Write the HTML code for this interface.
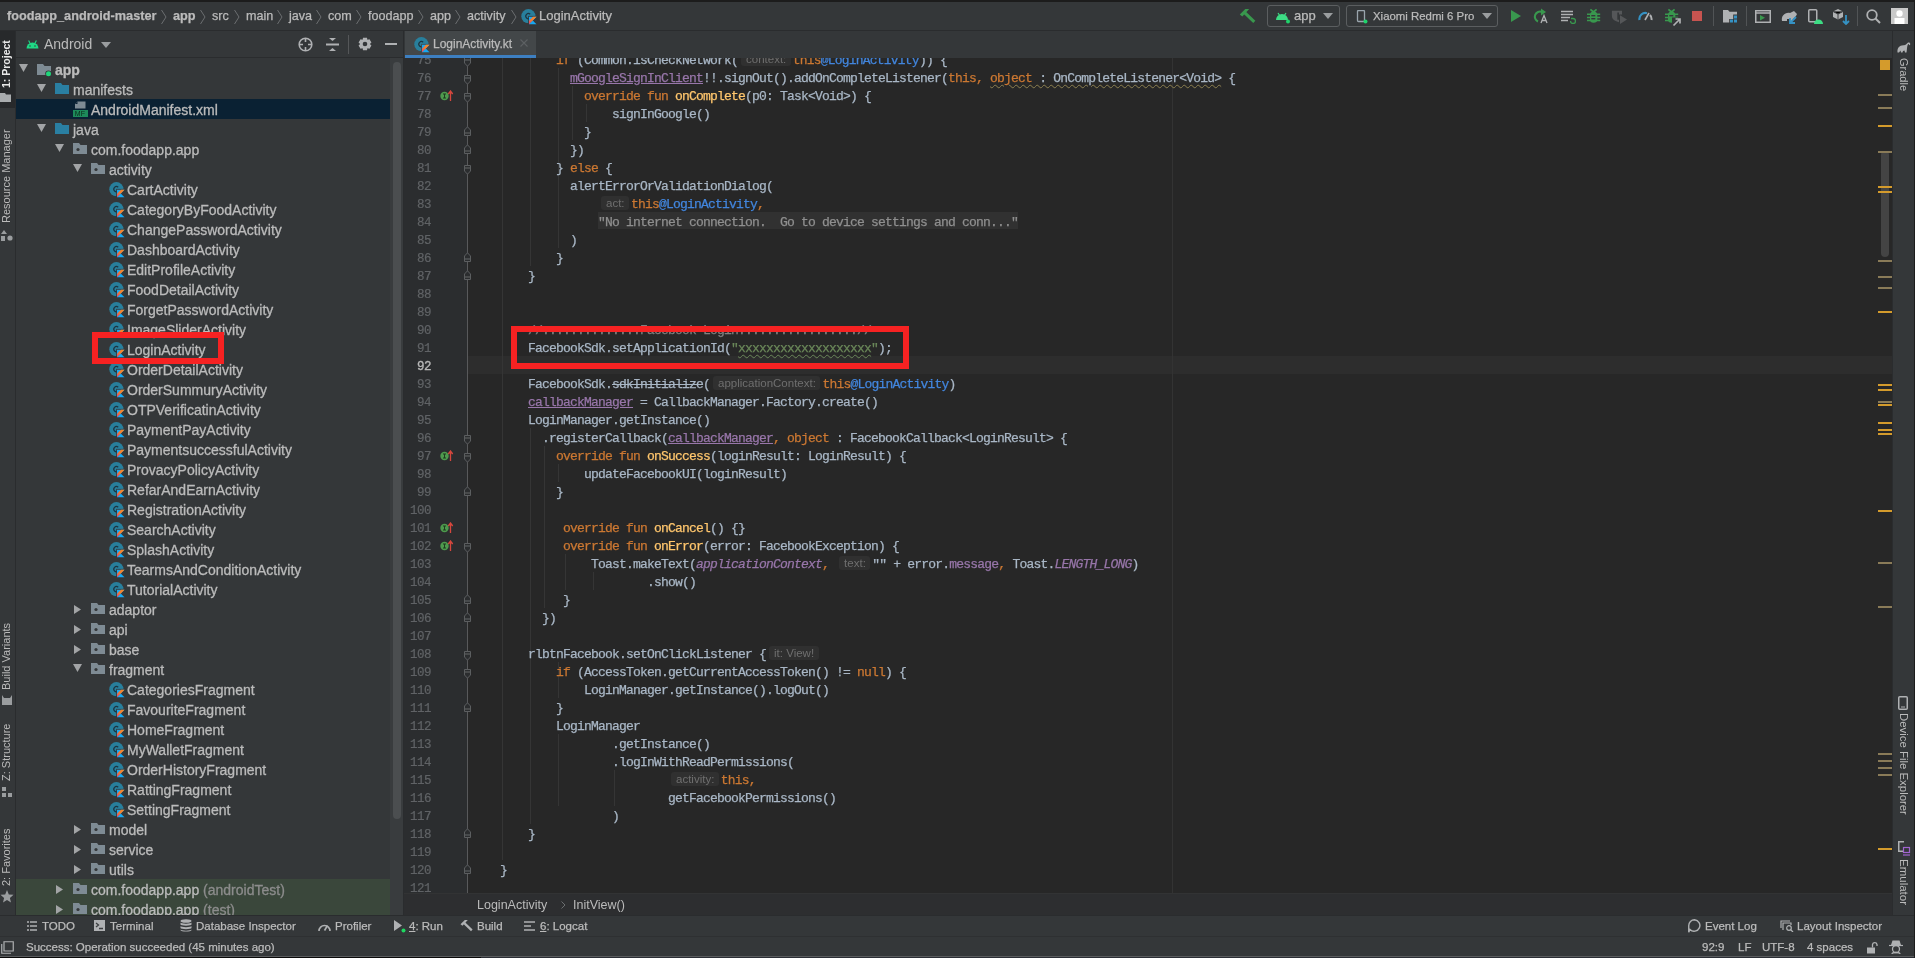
<!DOCTYPE html>
<html><head><meta charset="utf-8">
<style>
*{box-sizing:border-box;margin:0;padding:0}
html,body{will-change:transform;width:1915px;height:958px;overflow:hidden;background:#343739;font-family:"Liberation Sans",sans-serif;color:#bbbbbb}
.a{position:absolute}
#topline{left:0;top:0;width:1915px;height:2px;background:#1c1c1c}
#topbar{left:0;top:2px;width:1915px;height:29px;background:#343739;border-bottom:1px solid #2a2c2e}
.bc{position:absolute;top:0;height:28px;line-height:28px;font-size:13px;color:#bbbbbb;white-space:nowrap;-webkit-text-stroke:0.25px}
#leftstrip{left:0;top:31px;width:16px;height:884px;background:#343739;border-right:1px solid #2a2c2e}
#project{left:16px;top:31px;width:388px;height:884px;background:#343739}
#phead{left:0;top:0;width:388px;height:27px;border-bottom:1px solid #2a2c2e}
#tree{left:0;top:27px;width:388px;height:857px;overflow:hidden}
.row{position:absolute;left:0;height:20px;line-height:20px;font-size:14px;white-space:nowrap;color:#bbbbbb}
.row .t{position:absolute;top:0.5px;-webkit-text-stroke:0.3px}
#pdiv{left:403px;top:31px;width:1px;height:884px;background:#2a2c2e}
#tabs{left:404px;top:31px;width:1489px;height:27px;background:#343739}
#gutter{left:404px;top:58px;width:64px;height:835px;background:#2b2d2f;overflow:hidden}
#code{left:468px;top:58px;width:1424px;height:835px;background:#272727;overflow:hidden}
.ln{position:absolute;left:0;width:27px;text-align:right;font-family:"Liberation Mono",monospace;font-size:12.5px;letter-spacing:-0.5px;color:#606366;height:18px;line-height:18px;padding-top:2px;-webkit-text-stroke:0.2px}
.cl{position:absolute;left:4px;height:18px;line-height:18px;padding-top:2px;font-family:"Liberation Mono",monospace;font-size:13px;letter-spacing:-0.8px;-webkit-text-stroke:0.25px;color:#a9b7c6;white-space:pre}
.k{color:#cc7832}.f{color:#ffc66d}.p{color:#9876aa}.pu{color:#9876aa;text-decoration:underline;text-decoration-color:#9876aa}
.lb{color:#4286de}.s{color:#6a8759}.cm{color:#808080}.it{font-style:italic}
.h{display:inline-block;font-family:"Liberation Sans",sans-serif;font-size:11.5px;letter-spacing:0;-webkit-text-stroke:0;color:#6f6f6f;background:#303030;border-radius:3px;padding:0 4.5px 0 5px;height:14px;line-height:14px;vertical-align:1px;margin:0 2px 0 3px}
#bcbar{left:404px;top:893px;width:1489px;height:22px;background:#2d2e30;border-top:1px solid #323334}
#rightstrip{left:1892px;top:31px;width:23px;height:884px;background:#343739;border-left:1px solid #2a2c2e}
#bottombar{left:0;top:915px;width:1915px;height:21px;background:#343739;border-top:1px solid #2a2c2e}
#statusbar{left:0;top:936px;width:1915px;height:22px;background:#343739;border-top:1px solid #2e3032}
.tb{position:absolute;top:0;height:21px;line-height:21px;font-size:11.5px;color:#bbbbbb;white-space:nowrap;-webkit-text-stroke:0.25px}
.vt{position:absolute;font-size:11px;color:#bbbbbb;white-space:nowrap;transform-origin:0 0;transform:rotate(-90deg)}
.ln.cur{color:#b8b8b8;-webkit-text-stroke:0.35px}
.wv{text-decoration:underline wavy #8c8050;text-decoration-thickness:1px;text-underline-offset:2px}
.wg{text-decoration:underline wavy #6a8759;text-decoration-thickness:1px;text-underline-offset:2px}
.st{text-decoration:line-through}
.fold{color:#8f8f8f}

</style></head><body>
<svg width="0" height="0" style="position:absolute"><defs><linearGradient id="kg" x1="0" y1="1" x2="1" y2="0"><stop offset="0" stop-color="#e0407a"/><stop offset="0.45" stop-color="#f57a2e"/><stop offset="1" stop-color="#fb8c25"/></linearGradient>
<symbol id="clsic" viewBox="0 0 17 17"><circle cx="7.4" cy="7.2" r="7.1" fill="#287f9c"/><path d="M9.2 5.3A2.6 2.6 0 1 0 9.2 9.1" stroke="#1c3541" stroke-width="1.2" fill="none"/><rect x="7.2" y="6.9" width="9.2" height="9.2" fill="#343739"/><path d="M8 7.7H15.5L8 15.3Z" fill="#18a8f2"/><path d="M11.8 11.5L15.5 15.3H8Z" fill="#18a8f2"/><path d="M12 7.7H15.5L8 15.3V11.7Z" fill="url(#kg)"/></symbol><symbol id="clsic2" viewBox="0 0 17 17"><circle cx="7.4" cy="7.2" r="7.1" fill="#287f9c"/><path d="M9.2 5.3A2.6 2.6 0 1 0 9.2 9.1" stroke="#1c3541" stroke-width="1.2" fill="none"/><rect x="7.2" y="6.9" width="9.2" height="9.2" fill="#434749"/><path d="M8 7.7H15.5L8 15.3Z" fill="#18a8f2"/><path d="M11.8 11.5L15.5 15.3H8Z" fill="#18a8f2"/><path d="M12 7.7H15.5L8 15.3V11.7Z" fill="url(#kg)"/></symbol></defs></svg>
<div id="topline" class="a"></div>
<div id="topbar" class="a">
<div class="bc" style="left:7px;font-weight:bold;font-size:12.7px;">foodapp_android-master</div>
<div class="bc" style="left:173px;font-weight:bold;font-size:12.7px;">app</div>
<div class="bc" style="left:212px;font-size:12.6px;">src</div>
<div class="bc" style="left:246px;font-size:12.6px;">main</div>
<div class="bc" style="left:289px;font-size:12.6px;">java</div>
<div class="bc" style="left:328px;font-size:12.6px;">com</div>
<div class="bc" style="left:368px;font-size:12.6px;">foodapp</div>
<div class="bc" style="left:430px;font-size:12.6px;">app</div>
<div class="bc" style="left:467px;font-size:12.6px;">activity</div>
<svg class="a" style="left:161px;top:7px" width="6" height="16" viewBox="0 0 6 16"><path d="M0.5 1L5 8L0.5 15" stroke="#6b6e70" stroke-width="1" fill="none"/></svg>
<svg class="a" style="left:200px;top:7px" width="6" height="16" viewBox="0 0 6 16"><path d="M0.5 1L5 8L0.5 15" stroke="#6b6e70" stroke-width="1" fill="none"/></svg>
<svg class="a" style="left:234px;top:7px" width="6" height="16" viewBox="0 0 6 16"><path d="M0.5 1L5 8L0.5 15" stroke="#6b6e70" stroke-width="1" fill="none"/></svg>
<svg class="a" style="left:277px;top:7px" width="6" height="16" viewBox="0 0 6 16"><path d="M0.5 1L5 8L0.5 15" stroke="#6b6e70" stroke-width="1" fill="none"/></svg>
<svg class="a" style="left:316px;top:7px" width="6" height="16" viewBox="0 0 6 16"><path d="M0.5 1L5 8L0.5 15" stroke="#6b6e70" stroke-width="1" fill="none"/></svg>
<svg class="a" style="left:356px;top:7px" width="6" height="16" viewBox="0 0 6 16"><path d="M0.5 1L5 8L0.5 15" stroke="#6b6e70" stroke-width="1" fill="none"/></svg>
<svg class="a" style="left:418px;top:7px" width="6" height="16" viewBox="0 0 6 16"><path d="M0.5 1L5 8L0.5 15" stroke="#6b6e70" stroke-width="1" fill="none"/></svg>
<svg class="a" style="left:455px;top:7px" width="6" height="16" viewBox="0 0 6 16"><path d="M0.5 1L5 8L0.5 15" stroke="#6b6e70" stroke-width="1" fill="none"/></svg>
<svg class="a" style="left:511px;top:7px" width="6" height="16" viewBox="0 0 6 16"><path d="M0.5 1L5 8L0.5 15" stroke="#6b6e70" stroke-width="1" fill="none"/></svg>
<svg class="a" style="left:521px;top:7px" width="17" height="17" viewBox="0 0 17 17"><use href="#clsic"/></svg>
<div class="bc" style="left:539px">LoginActivity</div>
</div>
<svg class="a" style="left:1236px;top:4px" width="24" height="24" viewBox="0 0 24 24"><path d="M3.8 10.4L9.3 5H13.2L6.3 12.4Z" fill="#39984e"/><path d="M8.6 8.6L18.3 17.8" stroke="#39984e" stroke-width="3.1"/></svg>
<div class="a" style="left:1267px;top:5px;width:73px;height:22px;border:1px solid #5b5e60;border-radius:3px"></div>
<svg class="a" style="left:1275px;top:10px" width="16" height="14" viewBox="0 0 16 14"><path d="M1 10A6 6 0 0 1 13 10Z" fill="#3ddc84"/><path d="M3 3L5 6M11 3L9 6" stroke="#3ddc84" stroke-width="1.2"/><circle cx="13" cy="11.5" r="2" fill="#1fd36b"/></svg>
<div class="bc" style="left:1294px;top:2px;font-size:13px">app</div>
<svg class="a" style="left:1323px;top:13px" width="10" height="6" viewBox="0 0 10 6"><path d="M0 0H10L5 6Z" fill="#9a9d9f"/></svg>
<div class="a" style="left:1346px;top:5px;width:152px;height:22px;border:1px solid #5b5e60;border-radius:3px"></div>
<svg class="a" style="left:1356px;top:10px" width="12" height="14" viewBox="0 0 12 14"><rect x="1.5" y="0.5" width="7" height="11" rx="1" fill="none" stroke="#9aa5ad" stroke-width="1.3"/><circle cx="9.5" cy="11.5" r="2" fill="#1fd36b"/></svg>
<div class="bc" style="left:1373px;top:2px;font-size:11.4px">Xiaomi Redmi 6 Pro</div>
<svg class="a" style="left:1482px;top:13px" width="10" height="6" viewBox="0 0 10 6"><path d="M0 0H10L5 6Z" fill="#9a9d9f"/></svg>
<svg class="a" style="left:1511px;top:10px" width="10" height="12" viewBox="0 0 10 12"><path d="M0 0L10 6L0 12Z" fill="#39984e"/></svg>
<svg class="a" style="left:1533px;top:8px" width="16" height="16" viewBox="0 0 16 16"><path d="M9 4A5 5 0 1 0 5 13.5" stroke="#39984e" stroke-width="2" fill="none"/><path d="M8 0.5L13 4L8 7.5Z" fill="#39984e"/><path d="M8 15L11 7.5L14 15M9.2 12.5H12.8" stroke="#afb1b3" stroke-width="1.3" fill="none"/></svg>
<svg class="a" style="left:1561px;top:10px" width="15" height="14" viewBox="0 0 15 14"><path d="M0 1.5H12M0 4.5H12M0 7.5H9M0 10.5H7" stroke="#afb1b3" stroke-width="1.6"/><path d="M9.5 11A2.5 2.5 0 1 0 12 8.5H10" stroke="#39984e" stroke-width="1.3" fill="none"/></svg>
<svg class="a" style="left:1584px;top:7px" width="18" height="18" viewBox="0 0 18 18"><path d="M6.4 2.3L9.5 5M12.6 2.3L9.5 5" stroke="#39984e" stroke-width="1.7"/><path d="M6 8Q6 4.5 9.6 4.5Q13.3 4.5 13.3 8V12.8Q13.3 15.8 9.6 15.8Q6 15.8 6 12.8Z" fill="#39984e"/><path d="M3 7.2H16.2M3 10.4H16.2M3 13.5H16.2" stroke="#39984e" stroke-width="1.5"/><rect x="7.3" y="8" width="4" height="1.4" fill="#343739"/><rect x="7.3" y="11" width="4" height="1.4" fill="#343739"/></svg>
<svg class="a" style="left:1611px;top:10px" width="17" height="15" viewBox="0 0 17 15"><path d="M0.9 0.8H11V4.5H8V2.5H6.3V9.8H8V12.2C4.2 11.3 0.9 9.3 0.9 6Z" fill="#555759"/><path d="M9 5.3L16 9.6L9 14Z" fill="#555759"/></svg>
<svg class="a" style="left:1638px;top:10px" width="15" height="11" viewBox="0 0 15 11"><path d="M1.5 10A6 6 0 0 1 9 3.2" stroke="#3592c4" stroke-width="2.2" fill="none"/><path d="M7 10L11 3" stroke="#afb1b3" stroke-width="1.6"/><path d="M12 5A6 6 0 0 1 13.5 10" stroke="#afb1b3" stroke-width="2" fill="none"/></svg>
<svg class="a" style="left:1662px;top:7px" width="20" height="20" viewBox="0 0 20 20"><path d="M6.4 2.3L9.5 5M12.6 2.3L9.5 5" stroke="#39984e" stroke-width="1.7"/><path d="M6 8Q6 4.5 9.6 4.5Q13.3 4.5 13.3 8V12.8Q13.3 15.8 9.6 15.8Q6 15.8 6 12.8Z" fill="#39984e"/><path d="M3 7.2H16.2M3 10.4H16.2M3 13.5H9" stroke="#39984e" stroke-width="1.5"/><rect x="7.3" y="8" width="4" height="1.4" fill="#343739"/><path d="M10 10.5H20V20H10Z" fill="#343739"/><path d="M11.5 18.5L17.5 12.5M13.5 12H18V16.5" stroke="#afb1b3" stroke-width="1.7" fill="none"/></svg>
<div class="a" style="left:1692px;top:11px;width:10px;height:10px;background:#c75450"></div>
<div class="a" style="left:1713px;top:6px;width:1px;height:20px;background:#515456"></div>
<svg class="a" style="left:1723px;top:10px" width="16" height="14" viewBox="0 0 16 14"><path d="M0 0H5L6.5 1.8H14V4.6H10.2V9H6.2V12.5H0Z" fill="#afb1b3"/><rect x="11" y="5.5" width="3" height="3" fill="#3592c4"/><rect x="7" y="9.5" width="3" height="3" fill="#3592c4"/><rect x="11" y="9.5" width="3" height="3" fill="#3592c4"/></svg>
<div class="a" style="left:1746px;top:6px;width:1px;height:20px;background:#515456"></div>
<svg class="a" style="left:1755px;top:10px" width="16" height="13" viewBox="0 0 16 13"><rect x="0.75" y="0.75" width="14.5" height="11.5" fill="none" stroke="#afb1b3" stroke-width="1.5"/><path d="M1 3H15" stroke="#afb1b3" stroke-width="1.5"/><path d="M5 5L10 7.75L5 10.5Z" fill="#39984e"/></svg>
<svg class="a" style="left:1781px;top:9px" width="17" height="15" viewBox="0 0 17 15"><path d="M1 12C0 7 4 3 9 4L13 2L16 5C15 8 12 9 12 11V12H9V10H6V12H3Z" fill="#afb1b3"/><path d="M9 14L15 8M9 9V14H14" stroke="#3592c4" stroke-width="1.8" fill="none"/></svg>
<svg class="a" style="left:1808px;top:9px" width="16" height="16" viewBox="0 0 16 16"><rect x="0.75" y="0.75" width="8" height="12" rx="1" fill="none" stroke="#afb1b3" stroke-width="1.5"/><path d="M6 15A4.5 4.5 0 0 1 15 15Z" fill="#3ddc84"/></svg>
<svg class="a" style="left:1833px;top:9px" width="17" height="16" viewBox="0 0 17 16"><path d="M5 0L10 2.5V8L5 10.5L0 8V2.5Z" fill="#afb1b3"/><path d="M0 2.5L5 5L10 2.5M5 5V10.5" stroke="#3c3f41" stroke-width="1"/><path d="M13 6V15M10 12L13 15L16 12" stroke="#3592c4" stroke-width="1.8" fill="none"/></svg>
<div class="a" style="left:1857px;top:6px;width:1px;height:20px;background:#515456"></div>
<svg class="a" style="left:1866px;top:9px" width="15" height="15" viewBox="0 0 15 15"><circle cx="6" cy="6" r="4.8" fill="none" stroke="#afb1b3" stroke-width="1.8"/><path d="M9.5 9.5L14 14" stroke="#afb1b3" stroke-width="2"/></svg>
<svg class="a" style="left:1891px;top:8px" width="17" height="16" viewBox="0 0 17 16"><rect width="17" height="16" fill="#c9c9c9"/><circle cx="8.5" cy="5.5" r="3.2" fill="#fff"/><path d="M3.5 10H13.5V16H3.5Z" fill="#fff"/></svg>

<div id="leftstrip" class="a">
<div class="a" style="left:0;top:0;width:15px;height:77px;background:#27292b"></div>
<div class="vt" style="left:-1px;top:57px;font-size:10.5px;line-height:14px;color:#e8e8e8;font-weight:bold">1: Project</div>
<svg class="a" style="left:0;top:62px" width="12" height="9" viewBox="0 0 12 9"><path d="M0 0H5L6 1.5H11V9H0Z" fill="#a9acae"/></svg>
<div class="vt" style="left:-1px;top:192px;font-size:11px;line-height:14px">Resource Manager</div>
<svg class="a" style="left:1px;top:199px" width="12" height="11" viewBox="0 0 12 11"><path d="M3 0L6 4H0Z" fill="#9a9d9f"/><rect x="0" y="6" width="4" height="5" fill="#9a9d9f"/><circle cx="9" cy="8" r="2.6" fill="#9a9d9f"/></svg>
<div class="vt" style="left:-1px;top:659px;font-size:11px;line-height:14px">Build Variants</div>
<svg class="a" style="left:1px;top:664px" width="12" height="10" viewBox="0 0 12 10"><path d="M1 0L3 3H9L11 0V10H1Z" fill="#9a9d9f"/></svg>
<div class="vt" style="left:-1px;top:750px;font-size:11px;line-height:14px">Z: Structure</div>
<svg class="a" style="left:2px;top:756px" width="10" height="10" viewBox="0 0 10 10"><rect x="0" y="0" width="4" height="4" fill="#9a9d9f"/><rect x="0" y="6" width="4" height="4" fill="#9a9d9f"/><rect x="6" y="6" width="4" height="4" fill="#9a9d9f"/></svg>
<div class="vt" style="left:-1px;top:855px;font-size:11px;line-height:14px">2: Favorites</div>
<svg class="a" style="left:0;top:859px" width="14" height="13" viewBox="0 0 14 13"><path d="M7 0L8.8 4.5L13.5 4.8L9.9 7.9L11 12.5L7 10L3 12.5L4.1 7.9L0.5 4.8L5.2 4.5Z" fill="#9a9d9f"/></svg>

</div>
<div id="project" class="a">
<div id="phead" class="a">
<svg class="a" style="left:10px;top:9px" width="13" height="9" viewBox="0 0 13 9"><path d="M0.5 8.5A6 6 0 0 1 12.5 8.5Z" fill="#1fd985"/><path d="M2.6 0.5L4.2 3.5M10.4 0.5L8.8 3.5" stroke="#1fd985" stroke-width="1.1"/><circle cx="4" cy="6" r=".75" fill="#343739"/><circle cx="9" cy="6" r=".75" fill="#343739"/></svg>
<div class="a" style="left:28px;top:0;height:26px;line-height:26px;font-size:14px;color:#bbbbbb">Android</div>
<svg class="a" style="left:85px;top:11px" width="10" height="6" viewBox="0 0 10 6"><path d="M0 0H10L5 6Z" fill="#9a9d9f"/></svg>
<svg class="a" style="left:282px;top:5.5px" width="15" height="15" viewBox="0 0 15 15"><circle cx="7.5" cy="7.5" r="6.3" fill="none" stroke="#afb1b3" stroke-width="1.6"/><path d="M7.5 1V5M7.5 10V14M1 7.5H5M10 7.5H14" stroke="#afb1b3" stroke-width="1.6"/></svg>
<svg class="a" style="left:310px;top:7px" width="13" height="13" viewBox="0 0 13 13"><path d="M3 0H10L6.5 3Z" fill="#afb1b3"/><path d="M0 6.5H13" stroke="#afb1b3" stroke-width="2"/><path d="M3 13H10L6.5 10Z" fill="#afb1b3"/></svg>
<div class="a" style="left:332px;top:4px;width:1px;height:19px;background:#555759"></div>
<svg class="a" style="left:342px;top:6px" width="14" height="14" viewBox="0 0 14 14"><path d="M5.05 0.69 L8.95 0.69 L9.43 2.75 L9.47 2.77 L11.49 2.16 L13.44 5.54 L11.90 6.98 L11.90 7.02 L13.44 8.46 L11.49 11.84 L9.47 11.23 L9.43 11.25 L8.95 13.31 L5.05 13.31 L4.57 11.25 L4.53 11.23 L2.51 11.84 L0.56 8.46 L2.10 7.02 L2.10 6.98 L0.56 5.54 L2.51 2.16 L4.53 2.77 L4.57 2.75Z" fill="#afb1b3"/><circle cx="7" cy="7" r="2.3" fill="#343739"/></svg>
<div class="a" style="left:369px;top:12px;width:12px;height:2px;background:#afb1b3"></div>

</div>
<div id="tree" class="a">
<div class="row" style="top:1px;width:374px;">
<svg class="a" style="left:3px;top:5px" width="9" height="8" viewBox="0 0 9 8"><path d="M0 0H9L4.5 8Z" fill="#a2a4a6"/></svg>
<svg class="a" style="left:21px;top:5px" width="15" height="13" viewBox="0 0 15 13"><path d="M0 0H6L7.5 2H14V11H0Z" fill="#7e8b94"/><circle cx="11.5" cy="9.8" r="3.3" fill="#343739"/><circle cx="11.5" cy="9.8" r="2.5" fill="#1ed67a"/></svg>
<span class="t" style="left:39px;font-weight:bold;">app</span>
</div>
<div class="row" style="top:21px;width:374px;">
<svg class="a" style="left:21px;top:5px" width="9" height="8" viewBox="0 0 9 8"><path d="M0 0H9L4.5 8Z" fill="#a2a4a6"/></svg>
<svg class="a" style="left:39px;top:4px" width="14" height="11" viewBox="0 0 14 11"><path d="M0 0H6L7.5 2H14V11H0Z" fill="#2a7fa2"/></svg>
<span class="t" style="left:57px;">manifests</span>
</div>
<div class="row" style="top:41px;width:374px;background:#0a2133;">
<svg class="a" style="left:57px;top:2px" width="16" height="16" viewBox="0 0 16 16"><path d="M4.5 0.5H12.5V7.5H2V3Z" fill="#7e8b94"/><path d="M4.5 0.5V3H2Z" fill="#0a2133"/><rect x="0" y="9" width="15" height="7" fill="#1d8a5a"/><text x="1.8" y="15.2" font-family="Liberation Sans" font-size="7" fill="#0b2a1a">MF</text></svg>
<span class="t" style="left:75px;">AndroidManifest.xml</span>
</div>
<div class="row" style="top:61px;width:374px;">
<svg class="a" style="left:21px;top:5px" width="9" height="8" viewBox="0 0 9 8"><path d="M0 0H9L4.5 8Z" fill="#a2a4a6"/></svg>
<svg class="a" style="left:39px;top:4px" width="14" height="11" viewBox="0 0 14 11"><path d="M0 0H6L7.5 2H14V11H0Z" fill="#2a7fa2"/></svg>
<span class="t" style="left:57px;">java</span>
</div>
<div class="row" style="top:81px;width:374px;">
<svg class="a" style="left:39px;top:5px" width="9" height="8" viewBox="0 0 9 8"><path d="M0 0H9L4.5 8Z" fill="#a2a4a6"/></svg>
<svg class="a" style="left:57px;top:4px" width="14" height="11" viewBox="0 0 14 11"><path d="M0 0H6L7.5 2H14V11H0Z" fill="#7e8b94"/><circle cx="5" cy="6.5" r="1.6" fill="#343739"/></svg>
<span class="t" style="left:75px;">com.foodapp.app</span>
</div>
<div class="row" style="top:101px;width:374px;">
<svg class="a" style="left:57px;top:5px" width="9" height="8" viewBox="0 0 9 8"><path d="M0 0H9L4.5 8Z" fill="#a2a4a6"/></svg>
<svg class="a" style="left:75px;top:4px" width="14" height="11" viewBox="0 0 14 11"><path d="M0 0H6L7.5 2H14V11H0Z" fill="#7e8b94"/><circle cx="5" cy="6.5" r="1.6" fill="#343739"/></svg>
<span class="t" style="left:93px;">activity</span>
</div>
<div class="row" style="top:121px;width:374px;">
<svg class="a" style="left:92.5px;top:2.5px" width="17" height="17" viewBox="0 0 17 17"><use href="#clsic"/></svg>
<span class="t" style="left:111px;">CartActivity</span>
</div>
<div class="row" style="top:141px;width:374px;">
<svg class="a" style="left:92.5px;top:2.5px" width="17" height="17" viewBox="0 0 17 17"><use href="#clsic"/></svg>
<span class="t" style="left:111px;">CategoryByFoodActivity</span>
</div>
<div class="row" style="top:161px;width:374px;">
<svg class="a" style="left:92.5px;top:2.5px" width="17" height="17" viewBox="0 0 17 17"><use href="#clsic"/></svg>
<span class="t" style="left:111px;">ChangePasswordActivity</span>
</div>
<div class="row" style="top:181px;width:374px;">
<svg class="a" style="left:92.5px;top:2.5px" width="17" height="17" viewBox="0 0 17 17"><use href="#clsic"/></svg>
<span class="t" style="left:111px;">DashboardActivity</span>
</div>
<div class="row" style="top:201px;width:374px;">
<svg class="a" style="left:92.5px;top:2.5px" width="17" height="17" viewBox="0 0 17 17"><use href="#clsic"/></svg>
<span class="t" style="left:111px;">EditProfileActivity</span>
</div>
<div class="row" style="top:221px;width:374px;">
<svg class="a" style="left:92.5px;top:2.5px" width="17" height="17" viewBox="0 0 17 17"><use href="#clsic"/></svg>
<span class="t" style="left:111px;">FoodDetailActivity</span>
</div>
<div class="row" style="top:241px;width:374px;">
<svg class="a" style="left:92.5px;top:2.5px" width="17" height="17" viewBox="0 0 17 17"><use href="#clsic"/></svg>
<span class="t" style="left:111px;">ForgetPasswordActivity</span>
</div>
<div class="row" style="top:261px;width:374px;">
<svg class="a" style="left:92.5px;top:2.5px" width="17" height="17" viewBox="0 0 17 17"><use href="#clsic"/></svg>
<span class="t" style="left:111px;">ImageSliderActivity</span>
</div>
<div class="row" style="top:281px;width:374px;">
<svg class="a" style="left:92.5px;top:2.5px" width="17" height="17" viewBox="0 0 17 17"><use href="#clsic"/></svg>
<span class="t" style="left:111px;">LoginActivity</span>
</div>
<div class="row" style="top:301px;width:374px;">
<svg class="a" style="left:92.5px;top:2.5px" width="17" height="17" viewBox="0 0 17 17"><use href="#clsic"/></svg>
<span class="t" style="left:111px;">OrderDetailActivity</span>
</div>
<div class="row" style="top:321px;width:374px;">
<svg class="a" style="left:92.5px;top:2.5px" width="17" height="17" viewBox="0 0 17 17"><use href="#clsic"/></svg>
<span class="t" style="left:111px;">OrderSummuryActivity</span>
</div>
<div class="row" style="top:341px;width:374px;">
<svg class="a" style="left:92.5px;top:2.5px" width="17" height="17" viewBox="0 0 17 17"><use href="#clsic"/></svg>
<span class="t" style="left:111px;">OTPVerificatinActivity</span>
</div>
<div class="row" style="top:361px;width:374px;">
<svg class="a" style="left:92.5px;top:2.5px" width="17" height="17" viewBox="0 0 17 17"><use href="#clsic"/></svg>
<span class="t" style="left:111px;">PaymentPayActivity</span>
</div>
<div class="row" style="top:381px;width:374px;">
<svg class="a" style="left:92.5px;top:2.5px" width="17" height="17" viewBox="0 0 17 17"><use href="#clsic"/></svg>
<span class="t" style="left:111px;">PaymentsuccessfulActivity</span>
</div>
<div class="row" style="top:401px;width:374px;">
<svg class="a" style="left:92.5px;top:2.5px" width="17" height="17" viewBox="0 0 17 17"><use href="#clsic"/></svg>
<span class="t" style="left:111px;">ProvacyPolicyActivity</span>
</div>
<div class="row" style="top:421px;width:374px;">
<svg class="a" style="left:92.5px;top:2.5px" width="17" height="17" viewBox="0 0 17 17"><use href="#clsic"/></svg>
<span class="t" style="left:111px;">RefarAndEarnActivity</span>
</div>
<div class="row" style="top:441px;width:374px;">
<svg class="a" style="left:92.5px;top:2.5px" width="17" height="17" viewBox="0 0 17 17"><use href="#clsic"/></svg>
<span class="t" style="left:111px;">RegistrationActivity</span>
</div>
<div class="row" style="top:461px;width:374px;">
<svg class="a" style="left:92.5px;top:2.5px" width="17" height="17" viewBox="0 0 17 17"><use href="#clsic"/></svg>
<span class="t" style="left:111px;">SearchActivity</span>
</div>
<div class="row" style="top:481px;width:374px;">
<svg class="a" style="left:92.5px;top:2.5px" width="17" height="17" viewBox="0 0 17 17"><use href="#clsic"/></svg>
<span class="t" style="left:111px;">SplashActivity</span>
</div>
<div class="row" style="top:501px;width:374px;">
<svg class="a" style="left:92.5px;top:2.5px" width="17" height="17" viewBox="0 0 17 17"><use href="#clsic"/></svg>
<span class="t" style="left:111px;">TearmsAndConditionActivity</span>
</div>
<div class="row" style="top:521px;width:374px;">
<svg class="a" style="left:92.5px;top:2.5px" width="17" height="17" viewBox="0 0 17 17"><use href="#clsic"/></svg>
<span class="t" style="left:111px;">TutorialActivity</span>
</div>
<div class="row" style="top:541px;width:374px;">
<svg class="a" style="left:58px;top:6px" width="7" height="9" viewBox="0 0 7 9"><path d="M0 0V9L7 4.5Z" fill="#a2a4a6"/></svg>
<svg class="a" style="left:75px;top:4px" width="14" height="11" viewBox="0 0 14 11"><path d="M0 0H6L7.5 2H14V11H0Z" fill="#7e8b94"/><circle cx="5" cy="6.5" r="1.6" fill="#343739"/></svg>
<span class="t" style="left:93px;">adaptor</span>
</div>
<div class="row" style="top:561px;width:374px;">
<svg class="a" style="left:58px;top:6px" width="7" height="9" viewBox="0 0 7 9"><path d="M0 0V9L7 4.5Z" fill="#a2a4a6"/></svg>
<svg class="a" style="left:75px;top:4px" width="14" height="11" viewBox="0 0 14 11"><path d="M0 0H6L7.5 2H14V11H0Z" fill="#7e8b94"/><circle cx="5" cy="6.5" r="1.6" fill="#343739"/></svg>
<span class="t" style="left:93px;">api</span>
</div>
<div class="row" style="top:581px;width:374px;">
<svg class="a" style="left:58px;top:6px" width="7" height="9" viewBox="0 0 7 9"><path d="M0 0V9L7 4.5Z" fill="#a2a4a6"/></svg>
<svg class="a" style="left:75px;top:4px" width="14" height="11" viewBox="0 0 14 11"><path d="M0 0H6L7.5 2H14V11H0Z" fill="#7e8b94"/><circle cx="5" cy="6.5" r="1.6" fill="#343739"/></svg>
<span class="t" style="left:93px;">base</span>
</div>
<div class="row" style="top:601px;width:374px;">
<svg class="a" style="left:57px;top:5px" width="9" height="8" viewBox="0 0 9 8"><path d="M0 0H9L4.5 8Z" fill="#a2a4a6"/></svg>
<svg class="a" style="left:75px;top:4px" width="14" height="11" viewBox="0 0 14 11"><path d="M0 0H6L7.5 2H14V11H0Z" fill="#7e8b94"/><circle cx="5" cy="6.5" r="1.6" fill="#343739"/></svg>
<span class="t" style="left:93px;">fragment</span>
</div>
<div class="row" style="top:621px;width:374px;">
<svg class="a" style="left:92.5px;top:2.5px" width="17" height="17" viewBox="0 0 17 17"><use href="#clsic"/></svg>
<span class="t" style="left:111px;">CategoriesFragment</span>
</div>
<div class="row" style="top:641px;width:374px;">
<svg class="a" style="left:92.5px;top:2.5px" width="17" height="17" viewBox="0 0 17 17"><use href="#clsic"/></svg>
<span class="t" style="left:111px;">FavouriteFragment</span>
</div>
<div class="row" style="top:661px;width:374px;">
<svg class="a" style="left:92.5px;top:2.5px" width="17" height="17" viewBox="0 0 17 17"><use href="#clsic"/></svg>
<span class="t" style="left:111px;">HomeFragment</span>
</div>
<div class="row" style="top:681px;width:374px;">
<svg class="a" style="left:92.5px;top:2.5px" width="17" height="17" viewBox="0 0 17 17"><use href="#clsic"/></svg>
<span class="t" style="left:111px;">MyWalletFragment</span>
</div>
<div class="row" style="top:701px;width:374px;">
<svg class="a" style="left:92.5px;top:2.5px" width="17" height="17" viewBox="0 0 17 17"><use href="#clsic"/></svg>
<span class="t" style="left:111px;">OrderHistoryFragment</span>
</div>
<div class="row" style="top:721px;width:374px;">
<svg class="a" style="left:92.5px;top:2.5px" width="17" height="17" viewBox="0 0 17 17"><use href="#clsic"/></svg>
<span class="t" style="left:111px;">RattingFragment</span>
</div>
<div class="row" style="top:741px;width:374px;">
<svg class="a" style="left:92.5px;top:2.5px" width="17" height="17" viewBox="0 0 17 17"><use href="#clsic"/></svg>
<span class="t" style="left:111px;">SettingFragment</span>
</div>
<div class="row" style="top:761px;width:374px;">
<svg class="a" style="left:58px;top:6px" width="7" height="9" viewBox="0 0 7 9"><path d="M0 0V9L7 4.5Z" fill="#a2a4a6"/></svg>
<svg class="a" style="left:75px;top:4px" width="14" height="11" viewBox="0 0 14 11"><path d="M0 0H6L7.5 2H14V11H0Z" fill="#7e8b94"/><circle cx="5" cy="6.5" r="1.6" fill="#343739"/></svg>
<span class="t" style="left:93px;">model</span>
</div>
<div class="row" style="top:781px;width:374px;">
<svg class="a" style="left:58px;top:6px" width="7" height="9" viewBox="0 0 7 9"><path d="M0 0V9L7 4.5Z" fill="#a2a4a6"/></svg>
<svg class="a" style="left:75px;top:4px" width="14" height="11" viewBox="0 0 14 11"><path d="M0 0H6L7.5 2H14V11H0Z" fill="#7e8b94"/><circle cx="5" cy="6.5" r="1.6" fill="#343739"/></svg>
<span class="t" style="left:93px;">service</span>
</div>
<div class="row" style="top:801px;width:374px;">
<svg class="a" style="left:58px;top:6px" width="7" height="9" viewBox="0 0 7 9"><path d="M0 0V9L7 4.5Z" fill="#a2a4a6"/></svg>
<svg class="a" style="left:75px;top:4px" width="14" height="11" viewBox="0 0 14 11"><path d="M0 0H6L7.5 2H14V11H0Z" fill="#7e8b94"/><circle cx="5" cy="6.5" r="1.6" fill="#343739"/></svg>
<span class="t" style="left:93px;">utils</span>
</div>
<div class="row" style="top:821px;width:374px;background:#3a473b;">
<svg class="a" style="left:40px;top:6px" width="7" height="9" viewBox="0 0 7 9"><path d="M0 0V9L7 4.5Z" fill="#a2a4a6"/></svg>
<svg class="a" style="left:57px;top:4px" width="14" height="11" viewBox="0 0 14 11"><path d="M0 0H6L7.5 2H14V11H0Z" fill="#7e8b94"/><circle cx="5" cy="6.5" r="1.6" fill="#343739"/></svg>
<span class="t" style="left:75px;">com.foodapp.app <span style="color:#8c8c8c">(androidTest)</span></span>
</div>
<div class="row" style="top:841px;width:374px;background:#3a473b;">
<svg class="a" style="left:40px;top:6px" width="7" height="9" viewBox="0 0 7 9"><path d="M0 0V9L7 4.5Z" fill="#a2a4a6"/></svg>
<svg class="a" style="left:57px;top:4px" width="14" height="11" viewBox="0 0 14 11"><path d="M0 0H6L7.5 2H14V11H0Z" fill="#7e8b94"/><circle cx="5" cy="6.5" r="1.6" fill="#343739"/></svg>
<span class="t" style="left:75px;">com.foodapp.app <span style="color:#8c8c8c">(test)</span></span>
</div>
<div class="a" style="left:374px;top:0;width:14px;height:857px;background:#393c3e"></div>
<div class="a" style="left:377px;top:4px;width:8px;height:757px;border-radius:4px;background:#4b4e50"></div>
</div></div>
<div class="a" style="left:92px;top:332px;width:132px;height:32px;border:6px solid #f62222"></div>
<div id="pdiv" class="a"></div>
<div id="tabs" class="a">
<div class="a" style="left:1px;top:0;width:131px;height:24px;background:#434749"></div>
<div class="a" style="left:1px;top:24px;width:131px;height:3px;background:#3d7fc1"></div>
<svg class="a" style="left:10px;top:6px" width="17" height="17" viewBox="0 0 17 17"><use href="#clsic2"/></svg>
<div class="a" style="left:29px;top:1px;height:24px;line-height:24px;font-size:12px;color:#bbbbbb;-webkit-text-stroke:0.25px">LoginActivity.kt</div>
<svg class="a" style="left:116px;top:8px" width="8" height="8" viewBox="0 0 8 8"><path d="M0.5 0.5L7.5 7.5M7.5 0.5L0.5 7.5" stroke="#5d6163" stroke-width="1.1"/></svg>
</div>
<div id="gutter" class="a">
<div class="ln" style="top:-8px">75</div>
<div class="ln" style="top:10px">76</div>
<div class="ln" style="top:28px">77</div>
<div class="ln" style="top:46px">78</div>
<div class="ln" style="top:64px">79</div>
<div class="ln" style="top:82px">80</div>
<div class="ln" style="top:100px">81</div>
<div class="ln" style="top:118px">82</div>
<div class="ln" style="top:136px">83</div>
<div class="ln" style="top:154px">84</div>
<div class="ln" style="top:172px">85</div>
<div class="ln" style="top:190px">86</div>
<div class="ln" style="top:208px">87</div>
<div class="ln" style="top:226px">88</div>
<div class="ln" style="top:244px">89</div>
<div class="ln" style="top:262px">90</div>
<div class="ln" style="top:280px">91</div>
<div class="ln cur" style="top:298px">92</div>
<div class="ln" style="top:316px">93</div>
<div class="ln" style="top:334px">94</div>
<div class="ln" style="top:352px">95</div>
<div class="ln" style="top:370px">96</div>
<div class="ln" style="top:388px">97</div>
<div class="ln" style="top:406px">98</div>
<div class="ln" style="top:424px">99</div>
<div class="ln" style="top:442px">100</div>
<div class="ln" style="top:460px">101</div>
<div class="ln" style="top:478px">102</div>
<div class="ln" style="top:496px">103</div>
<div class="ln" style="top:514px">104</div>
<div class="ln" style="top:532px">105</div>
<div class="ln" style="top:550px">106</div>
<div class="ln" style="top:568px">107</div>
<div class="ln" style="top:586px">108</div>
<div class="ln" style="top:604px">109</div>
<div class="ln" style="top:622px">110</div>
<div class="ln" style="top:640px">111</div>
<div class="ln" style="top:658px">112</div>
<div class="ln" style="top:676px">113</div>
<div class="ln" style="top:694px">114</div>
<div class="ln" style="top:712px">115</div>
<div class="ln" style="top:730px">116</div>
<div class="ln" style="top:748px">117</div>
<div class="ln" style="top:766px">118</div>
<div class="ln" style="top:784px">119</div>
<div class="ln" style="top:802px">120</div>
<div class="ln" style="top:820px">121</div>
</div>
<div id="code" class="a">
<div class="a" style="left:0;top:298px;width:1425px;height:18px;background:#2d2d2d"></div>
<div class="a" style="left:130px;top:154px;width:420px;height:17px;background:#313131"></div>
<div class="a" style="left:704px;top:0;width:1px;height:835px;background:#333333"></div>
<div class="a" style="left:34px;top:-8px;width:1px;height:810px;background:#353535"></div>
<div class="a" style="left:62px;top:-8px;width:1px;height:216px;background:#353535"></div>
<div class="a" style="left:90px;top:10px;width:1px;height:180px;background:#353535"></div>
<div class="a" style="left:104px;top:28px;width:1px;height:54px;background:#353535"></div>
<div class="a" style="left:118px;top:46px;width:1px;height:18px;background:#353535"></div>
<div class="a" style="left:62px;top:370px;width:1px;height:396px;background:#353535"></div>
<div class="a" style="left:76px;top:388px;width:1px;height:162px;background:#353535"></div>
<div class="a" style="left:90px;top:406px;width:1px;height:18px;background:#353535"></div>
<div class="a" style="left:97px;top:496px;width:1px;height:36px;background:#353535"></div>
<div class="a" style="left:125px;top:514px;width:1px;height:18px;background:#353535"></div>
<div class="a" style="left:90px;top:604px;width:1px;height:36px;background:#353535"></div>
<div class="a" style="left:90px;top:676px;width:1px;height:72px;background:#353535"></div>
<div class="a" style="left:146px;top:712px;width:1px;height:36px;background:#353535"></div>
<div class="cl" style="left:88px;top:-8px"><span class="k">if</span> (Common.isCheckNetwork(<span class="h">context:</span><span class="k">this</span><span class="lb">@LoginActivity</span>)) {</div>
<div class="cl" style="left:102px;top:10px"><span class="pu">mGoogleSignInClient</span>!!.signOut().addOnCompleteListener(<span class="k">this,</span> <span class="wv"><span class="k">object</span> : OnCompleteListener&lt;Void&gt;</span> {</div>
<div class="cl" style="left:116px;top:28px"><span class="k">override fun </span><span class="f">onComplete</span>(p0: Task&lt;Void&gt;) {</div>
<div class="cl" style="left:144px;top:46px">signInGoogle()</div>
<div class="cl" style="left:116px;top:64px">}</div>
<div class="cl" style="left:102px;top:82px">})</div>
<div class="cl" style="left:88px;top:100px">} <span class="k">else</span> {</div>
<div class="cl" style="left:102px;top:118px">alertErrorOrValidationDialog(</div>
<div class="cl" style="left:130px;top:136px"><span class="h">act:</span><span class="k">this</span><span class="lb">@LoginActivity</span><span class="k">,</span></div>
<div class="cl" style="left:130px;top:154px"><span class="fold">"No internet connection.  Go to device settings and conn..."</span></div>
<div class="cl" style="left:102px;top:172px">)</div>
<div class="cl" style="left:88px;top:190px">}</div>
<div class="cl" style="left:60px;top:208px">}</div>
<div class="cl" style="left:60px;top:262px"><span class="cm">//..............Facebook Login.................//</span></div>
<div class="cl" style="left:60px;top:280px">FacebookSdk.setApplicationId(<span class="s">"<span class="wg">xxxxxxxxxxxxxxxxxxx</span>"</span>);</div>
<div class="cl" style="left:60px;top:316px">FacebookSdk.<span class="st">sdkInitialize</span>(<span class="h">applicationContext:</span><span class="k">this</span><span class="lb">@LoginActivity</span>)</div>
<div class="cl" style="left:60px;top:334px"><span class="pu">callbackManager</span> = CallbackManager.Factory.create()</div>
<div class="cl" style="left:60px;top:352px">LoginManager.getInstance()</div>
<div class="cl" style="left:74px;top:370px">.registerCallback(<span class="pu">callbackManager</span><span class="k">, object</span> : FacebookCallback&lt;LoginResult&gt; {</div>
<div class="cl" style="left:88px;top:388px"><span class="k">override fun </span><span class="f">onSuccess</span>(loginResult: LoginResult) {</div>
<div class="cl" style="left:116px;top:406px">updateFacebookUI(loginResult)</div>
<div class="cl" style="left:88px;top:424px">}</div>
<div class="cl" style="left:95px;top:460px"><span class="k">override fun </span><span class="f">onCancel</span>() {}</div>
<div class="cl" style="left:95px;top:478px"><span class="k">override fun </span><span class="f">onError</span>(error: FacebookException) {</div>
<div class="cl" style="left:123px;top:496px">Toast.makeText(<span class="p it">applicationContext</span><span class="k">,</span> <span class="h">text:</span>"" + error.<span class="p">message</span><span class="k">,</span> Toast.<span class="p it">LENGTH_LONG</span>)</div>
<div class="cl" style="left:179px;top:514px">.show()</div>
<div class="cl" style="left:95px;top:532px">}</div>
<div class="cl" style="left:74px;top:550px">})</div>
<div class="cl" style="left:60px;top:586px">rlbtnFacebook.setOnClickListener {<span class="h">it: View!</span></div>
<div class="cl" style="left:88px;top:604px"><span class="k">if</span> (AccessToken.getCurrentAccessToken() != <span class="k">null</span>) {</div>
<div class="cl" style="left:116px;top:622px">LoginManager.getInstance().logOut()</div>
<div class="cl" style="left:88px;top:640px">}</div>
<div class="cl" style="left:88px;top:658px">LoginManager</div>
<div class="cl" style="left:144px;top:676px">.getInstance()</div>
<div class="cl" style="left:144px;top:694px">.logInWithReadPermissions(</div>
<div class="cl" style="left:200px;top:712px"><span class="h">activity:</span><span class="k">this,</span></div>
<div class="cl" style="left:200px;top:730px">getFacebookPermissions()</div>
<div class="cl" style="left:144px;top:748px">)</div>
<div class="cl" style="left:60px;top:766px">}</div>
<div class="cl" style="left:32px;top:802px">}</div>
<div class="a" style="left:43px;top:268px;width:398px;height:43px;border:6px solid #f62222"></div>
<div class="a" style="left:1413px;top:93px;width:8px;height:106px;border-radius:4px;background:#444444"></div>
<div class="a" style="left:1410px;top:36px;width:14px;height:2px;background:#8a7b58"></div>
<div class="a" style="left:1410px;top:49px;width:14px;height:2px;background:#8a7b58"></div>
<div class="a" style="left:1410px;top:67px;width:14px;height:2px;background:#d49b2c"></div>
<div class="a" style="left:1410px;top:93px;width:14px;height:2px;background:#8a7b58"></div>
<div class="a" style="left:1410px;top:128px;width:14px;height:2px;background:#d49b2c"></div>
<div class="a" style="left:1410px;top:133px;width:14px;height:2px;background:#d49b2c"></div>
<div class="a" style="left:1410px;top:202px;width:14px;height:2px;background:#8a7b58"></div>
<div class="a" style="left:1410px;top:218px;width:14px;height:2px;background:#8a7b58"></div>
<div class="a" style="left:1410px;top:229px;width:14px;height:2px;background:#8a7b58"></div>
<div class="a" style="left:1410px;top:253px;width:14px;height:2px;background:#d49b2c"></div>
<div class="a" style="left:1410px;top:326px;width:14px;height:2px;background:#d49b2c"></div>
<div class="a" style="left:1410px;top:331px;width:14px;height:2px;background:#d49b2c"></div>
<div class="a" style="left:1410px;top:343px;width:14px;height:2px;background:#8a7b58"></div>
<div class="a" style="left:1410px;top:346px;width:14px;height:2px;background:#d49b2c"></div>
<div class="a" style="left:1410px;top:364px;width:14px;height:2px;background:#d49b2c"></div>
<div class="a" style="left:1410px;top:371px;width:14px;height:2px;background:#d49b2c"></div>
<div class="a" style="left:1410px;top:375px;width:14px;height:2px;background:#d49b2c"></div>
<div class="a" style="left:1410px;top:452px;width:14px;height:2px;background:#d49b2c"></div>
<div class="a" style="left:1410px;top:504px;width:14px;height:2px;background:#8a7b58"></div>
<div class="a" style="left:1410px;top:548px;width:14px;height:2px;background:#8a7b58"></div>
<div class="a" style="left:1410px;top:695px;width:14px;height:2px;background:#8a7b58"></div>
<div class="a" style="left:1410px;top:702px;width:14px;height:2px;background:#8a7b58"></div>
<div class="a" style="left:1410px;top:709px;width:14px;height:2px;background:#8a7b58"></div>
<div class="a" style="left:1410px;top:716px;width:14px;height:2px;background:#8a7b58"></div>
<div class="a" style="left:1410px;top:790px;width:14px;height:2px;background:#d49b2c"></div>
<div class="a" style="left:1412px;top:2px;width:10px;height:10px;background:#d49b2c"></div>
</div>
<div class="a" style="left:404px;top:58px;width:70px;height:835px;overflow:hidden"><div class="a" style="left:63px;top:0;width:1px;height:835px;background:#58595b"></div><svg class="a" style="left:60px;top:-1px" width="7" height="10" viewBox="0 0 7 10"><path d="M0.5 0.5H6.5V6L3.5 9.2L0.5 6Z" fill="#2b2d2f" stroke="#5c5e60"/><path d="M0.5 3H6.5" stroke="#5c5e60" stroke-width="1.2"/></svg><svg class="a" style="left:60px;top:17px" width="7" height="10" viewBox="0 0 7 10"><path d="M0.5 0.5H6.5V6L3.5 9.2L0.5 6Z" fill="#2b2d2f" stroke="#5c5e60"/><path d="M0.5 3H6.5" stroke="#5c5e60" stroke-width="1.2"/></svg><svg class="a" style="left:60px;top:35px" width="7" height="10" viewBox="0 0 7 10"><path d="M0.5 0.5H6.5V6L3.5 9.2L0.5 6Z" fill="#2b2d2f" stroke="#5c5e60"/><path d="M0.5 3H6.5" stroke="#5c5e60" stroke-width="1.2"/></svg><svg class="a" style="left:60px;top:107px" width="7" height="10" viewBox="0 0 7 10"><path d="M0.5 0.5H6.5V6L3.5 9.2L0.5 6Z" fill="#2b2d2f" stroke="#5c5e60"/><path d="M0.5 3H6.5" stroke="#5c5e60" stroke-width="1.2"/></svg><svg class="a" style="left:60px;top:377px" width="7" height="10" viewBox="0 0 7 10"><path d="M0.5 0.5H6.5V6L3.5 9.2L0.5 6Z" fill="#2b2d2f" stroke="#5c5e60"/><path d="M0.5 3H6.5" stroke="#5c5e60" stroke-width="1.2"/></svg><svg class="a" style="left:60px;top:395px" width="7" height="10" viewBox="0 0 7 10"><path d="M0.5 0.5H6.5V6L3.5 9.2L0.5 6Z" fill="#2b2d2f" stroke="#5c5e60"/><path d="M0.5 3H6.5" stroke="#5c5e60" stroke-width="1.2"/></svg><svg class="a" style="left:60px;top:485px" width="7" height="10" viewBox="0 0 7 10"><path d="M0.5 0.5H6.5V6L3.5 9.2L0.5 6Z" fill="#2b2d2f" stroke="#5c5e60"/><path d="M0.5 3H6.5" stroke="#5c5e60" stroke-width="1.2"/></svg><svg class="a" style="left:60px;top:593px" width="7" height="10" viewBox="0 0 7 10"><path d="M0.5 0.5H6.5V6L3.5 9.2L0.5 6Z" fill="#2b2d2f" stroke="#5c5e60"/><path d="M0.5 3H6.5" stroke="#5c5e60" stroke-width="1.2"/></svg><svg class="a" style="left:60px;top:611px" width="7" height="10" viewBox="0 0 7 10"><path d="M0.5 0.5H6.5V6L3.5 9.2L0.5 6Z" fill="#2b2d2f" stroke="#5c5e60"/><path d="M0.5 3H6.5" stroke="#5c5e60" stroke-width="1.2"/></svg><svg class="a" style="left:60px;top:68px" width="7" height="10" viewBox="0 0 7 10"><path d="M0.5 9.5H6.5V4L3.5 0.8L0.5 4Z" fill="#2b2d2f" stroke="#5c5e60"/><path d="M0.5 7H6.5" stroke="#5c5e60" stroke-width="1.2"/></svg><svg class="a" style="left:60px;top:86px" width="7" height="10" viewBox="0 0 7 10"><path d="M0.5 9.5H6.5V4L3.5 0.8L0.5 4Z" fill="#2b2d2f" stroke="#5c5e60"/><path d="M0.5 7H6.5" stroke="#5c5e60" stroke-width="1.2"/></svg><svg class="a" style="left:60px;top:194px" width="7" height="10" viewBox="0 0 7 10"><path d="M0.5 9.5H6.5V4L3.5 0.8L0.5 4Z" fill="#2b2d2f" stroke="#5c5e60"/><path d="M0.5 7H6.5" stroke="#5c5e60" stroke-width="1.2"/></svg><svg class="a" style="left:60px;top:212px" width="7" height="10" viewBox="0 0 7 10"><path d="M0.5 9.5H6.5V4L3.5 0.8L0.5 4Z" fill="#2b2d2f" stroke="#5c5e60"/><path d="M0.5 7H6.5" stroke="#5c5e60" stroke-width="1.2"/></svg><svg class="a" style="left:60px;top:428px" width="7" height="10" viewBox="0 0 7 10"><path d="M0.5 9.5H6.5V4L3.5 0.8L0.5 4Z" fill="#2b2d2f" stroke="#5c5e60"/><path d="M0.5 7H6.5" stroke="#5c5e60" stroke-width="1.2"/></svg><svg class="a" style="left:60px;top:536px" width="7" height="10" viewBox="0 0 7 10"><path d="M0.5 9.5H6.5V4L3.5 0.8L0.5 4Z" fill="#2b2d2f" stroke="#5c5e60"/><path d="M0.5 7H6.5" stroke="#5c5e60" stroke-width="1.2"/></svg><svg class="a" style="left:60px;top:554px" width="7" height="10" viewBox="0 0 7 10"><path d="M0.5 9.5H6.5V4L3.5 0.8L0.5 4Z" fill="#2b2d2f" stroke="#5c5e60"/><path d="M0.5 7H6.5" stroke="#5c5e60" stroke-width="1.2"/></svg><svg class="a" style="left:60px;top:644px" width="7" height="10" viewBox="0 0 7 10"><path d="M0.5 9.5H6.5V4L3.5 0.8L0.5 4Z" fill="#2b2d2f" stroke="#5c5e60"/><path d="M0.5 7H6.5" stroke="#5c5e60" stroke-width="1.2"/></svg><svg class="a" style="left:60px;top:770px" width="7" height="10" viewBox="0 0 7 10"><path d="M0.5 9.5H6.5V4L3.5 0.8L0.5 4Z" fill="#2b2d2f" stroke="#5c5e60"/><path d="M0.5 7H6.5" stroke="#5c5e60" stroke-width="1.2"/></svg><svg class="a" style="left:60px;top:806px" width="7" height="10" viewBox="0 0 7 10"><path d="M0.5 9.5H6.5V4L3.5 0.8L0.5 4Z" fill="#2b2d2f" stroke="#5c5e60"/><path d="M0.5 7H6.5" stroke="#5c5e60" stroke-width="1.2"/></svg><svg class="a" style="left:36px;top:32px" width="14" height="11" viewBox="0 0 14 11"><circle cx="4.5" cy="6" r="4.2" fill="#4d9a4d"/><path d="M3 4H6M4.5 4V8M3 8H6" stroke="#1f3a1f" stroke-width="1"/><path d="M10.5 11V1.5M8.3 4L10.5 1L12.7 4" stroke="#d6473d" stroke-width="1.3" fill="none"/></svg><svg class="a" style="left:36px;top:392px" width="14" height="11" viewBox="0 0 14 11"><circle cx="4.5" cy="6" r="4.2" fill="#4d9a4d"/><path d="M3 4H6M4.5 4V8M3 8H6" stroke="#1f3a1f" stroke-width="1"/><path d="M10.5 11V1.5M8.3 4L10.5 1L12.7 4" stroke="#d6473d" stroke-width="1.3" fill="none"/></svg><svg class="a" style="left:36px;top:464px" width="14" height="11" viewBox="0 0 14 11"><circle cx="4.5" cy="6" r="4.2" fill="#4d9a4d"/><path d="M3 4H6M4.5 4V8M3 8H6" stroke="#1f3a1f" stroke-width="1"/><path d="M10.5 11V1.5M8.3 4L10.5 1L12.7 4" stroke="#d6473d" stroke-width="1.3" fill="none"/></svg><svg class="a" style="left:36px;top:482px" width="14" height="11" viewBox="0 0 14 11"><circle cx="4.5" cy="6" r="4.2" fill="#4d9a4d"/><path d="M3 4H6M4.5 4V8M3 8H6" stroke="#1f3a1f" stroke-width="1"/><path d="M10.5 11V1.5M8.3 4L10.5 1L12.7 4" stroke="#d6473d" stroke-width="1.3" fill="none"/></svg></div>
<div id="bcbar" class="a">
<div class="a" style="left:73px;top:1px;height:21px;line-height:21px;font-size:12.5px;color:#bbbbbb">LoginActivity</div>
<svg class="a" style="left:157px;top:7px" width="5" height="8" viewBox="0 0 5 8"><path d="M0.5 0.5L4 4L0.5 7.5" stroke="#6b6e70" fill="none"/></svg>
<div class="a" style="left:169px;top:1px;height:21px;line-height:21px;font-size:12.5px;color:#bbbbbb">InitView()</div>
</div>
<div id="rightstrip" class="a">
<svg class="a" style="left:4px;top:11px" width="14" height="11" viewBox="0 0 14 11"><path d="M0.5 10.5C0 6 2.5 3 7 3.3C8.5 3.3 9.5 2 10.5 1C11.5 0 13.5 0.5 13.2 2.5C13 3.5 12 3.5 12 2.8C12 1.5 11 2 10.5 3.5C10 5 10 7 9.5 10.5H8L7.5 8.5L6 9L5.5 10.5H4L3.5 8.5L2 10.5Z" fill="#afb1b3"/></svg>
<div class="vt" style="left:18px;top:27px;font-size:11px;line-height:14px;transform:rotate(90deg)">Gradle</div>
<svg class="a" style="left:5px;top:665px" width="10" height="14" viewBox="0 0 10 14"><rect x="0.75" y="0.75" width="8.5" height="12.5" rx="1" fill="none" stroke="#afb1b3" stroke-width="1.5"/><path d="M3 11H7" stroke="#afb1b3"/></svg>
<div class="vt" style="left:18px;top:682px;font-size:11.4px;line-height:14px;transform:rotate(90deg)">Device File Explorer</div>
<svg class="a" style="left:5px;top:810px" width="13" height="15" viewBox="0 0 13 15"><path d="M6 0.75H0.75V10.25H6" stroke="#afb1b3" stroke-width="1.5" fill="none"/><rect x="5.5" y="6.5" width="6" height="5" fill="none" stroke="#a064cf" stroke-width="1.2"/><path d="M5 14H12" stroke="#a064cf" stroke-width="1.2"/></svg>
<div class="vt" style="left:18px;top:828px;font-size:11.5px;line-height:14px;transform:rotate(90deg)">Emulator</div>
</div>
<div id="bottombar" class="a">
<svg class="a" style="left:27px;top:5px" width="10" height="10" viewBox="0 0 10 10"><path d="M0 1H2M3 1H10M0 5H2M3 5H10M0 9H2M3 9H10" stroke="#afb1b3" stroke-width="1.6"/></svg>
<div class="tb" style="left:42px">TODO</div>
<svg class="a" style="left:94px;top:4px" width="11" height="11" viewBox="0 0 11 11"><rect width="11" height="11" fill="#afb1b3"/><path d="M2 3L4.5 5L2 7M5 8.5H9" stroke="#3c3f41" stroke-width="1.3" fill="none"/></svg>
<div class="tb" style="left:110px">Terminal</div>
<svg class="a" style="left:180px;top:3px" width="12" height="13" viewBox="0 0 12 13"><ellipse cx="6" cy="2" rx="5.5" ry="1.8" fill="#afb1b3"/><path d="M0.5 3.5C0.5 5 11.5 5 11.5 3.5V5.5C11.5 7 0.5 7 0.5 5.5ZM0.5 7C0.5 8.5 11.5 8.5 11.5 7V9C11.5 10.5 0.5 10.5 0.5 9ZM0.5 10.5C0.5 12 11.5 12 11.5 10.5V11C11.5 13 0.5 13 0.5 11Z" fill="#afb1b3"/></svg>
<div class="tb" style="left:196px">Database Inspector</div>
<svg class="a" style="left:318px;top:6px" width="13" height="9" viewBox="0 0 13 9"><path d="M1 9A5.5 5.5 0 0 1 12 9" stroke="#afb1b3" stroke-width="1.6" fill="none"/><path d="M6.5 8.5L9.5 3.5" stroke="#afb1b3" stroke-width="1.6"/></svg>
<div class="tb" style="left:335px">Profiler</div>
<svg class="a" style="left:394px;top:4px" width="12" height="13" viewBox="0 0 12 13"><path d="M0 0L8 5.5L0 11Z" fill="#afb1b3"/><circle cx="9.5" cy="10.5" r="2" fill="#1ed760"/></svg>
<div class="tb" style="left:409px"><u>4</u>: Run</div>
<svg class="a" style="left:458px;top:1px" width="18" height="18" viewBox="0 0 18 18"><path d="M2.5 7.3L6.8 3H9.8L4.5 8.8Z" fill="#afb1b3"/><path d="M6.3 6.2L13.8 13.4" stroke="#afb1b3" stroke-width="2.3"/></svg>
<div class="tb" style="left:477px">Build</div>
<svg class="a" style="left:524px;top:5px" width="11" height="10" viewBox="0 0 11 10"><path d="M0 1H11M0 5H7M0 9H11" stroke="#afb1b3" stroke-width="1.6"/></svg>
<div class="tb" style="left:540px"><u>6</u>: Logcat</div>
<svg class="a" style="left:1688px;top:3px" width="13" height="14" viewBox="0 0 13 14"><path d="M6.5 0.75A5.75 5.75 0 1 1 2 10.5L0.75 13.2V6.5A5.75 5.75 0 0 1 6.5 0.75Z" fill="none" stroke="#afb1b3" stroke-width="1.4"/></svg>
<div class="tb" style="left:1705px">Event Log</div>
<svg class="a" style="left:1780px;top:4px" width="14" height="12" viewBox="0 0 14 12"><path d="M1 8V1H10M3 10V3H11V5" stroke="#afb1b3" stroke-width="1.2" fill="none"/><circle cx="9" cy="8" r="2.3" fill="none" stroke="#afb1b3" stroke-width="1.2"/><path d="M10.7 9.7L13 12" stroke="#afb1b3" stroke-width="1.3"/></svg>
<div class="tb" style="left:1797px">Layout Inspector</div>
</div>
<div id="statusbar" class="a">
<svg class="a" style="left:1px;top:4px" width="13" height="13" viewBox="0 0 13 13"><path d="M3 0.75H12.25V10H3Z" fill="none" stroke="#afb1b3" stroke-width="1.2"/><path d="M0.75 3V12.25H10" fill="none" stroke="#afb1b3" stroke-width="1.2"/></svg>
<div class="tb" style="left:26px;height:21px;line-height:21px">Success: Operation succeeded (45 minutes ago)</div>
<div class="tb" style="left:1702px;height:21px;line-height:21px">92:9</div>
<div class="tb" style="left:1738px;height:21px;line-height:21px">LF</div>
<div class="tb" style="left:1762px;height:21px;line-height:21px">UTF-8</div>
<div class="tb" style="left:1807px;height:21px;line-height:21px">4 spaces</div>
<svg class="a" style="left:1866px;top:4px" width="12" height="13" viewBox="0 0 12 13"><path d="M1 6.5H9V12.5H1Z" fill="#afb1b3"/><path d="M6.5 6.5V3.5A2.3 2.3 0 0 1 11 3.5V5" stroke="#afb1b3" stroke-width="1.3" fill="none"/></svg>
<svg class="a" style="left:1889px;top:3px" width="14" height="14" viewBox="0 0 14 14"><path d="M2 5H12L10.5 0.5H3.5Z" fill="#afb1b3"/><path d="M0 5.5H14" stroke="#afb1b3" stroke-width="1.2"/><circle cx="7" cy="9" r="3.5" fill="none" stroke="#afb1b3" stroke-width="1.3"/><path d="M3 14C3 12 11 12 11 14" stroke="#afb1b3" stroke-width="1.3" fill="none"/></svg>
</div>

<div class="a" style="left:0;top:956px;width:1914px;height:1px;background:#5a5c5e"></div>
<div class="a" style="left:0;top:957px;width:481px;height:1px;background:#0a0a0a"></div>
<div class="a" style="left:481px;top:957px;width:1434px;height:1px;background:#2b2e35"></div>
<div class="a" style="left:1914px;top:0;width:1px;height:958px;background:#1c1c1c"></div>
</body></html>
